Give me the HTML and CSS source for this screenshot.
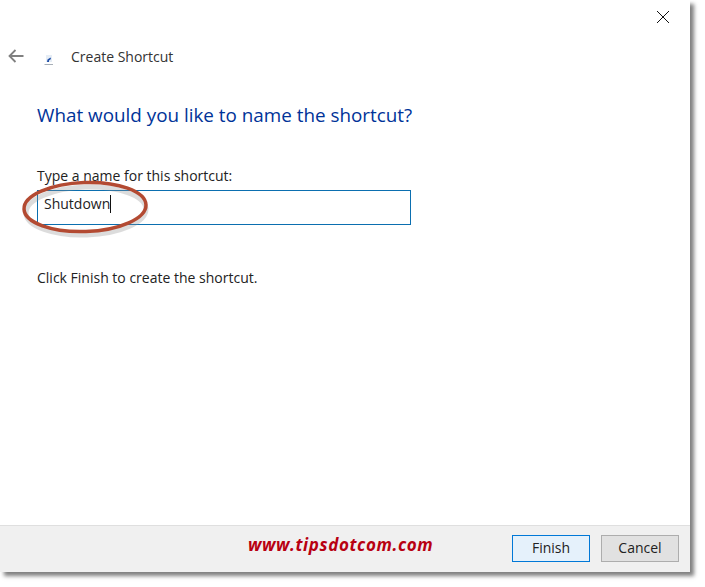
FILE: index.html
```html
<!DOCTYPE html>
<html lang="en">

<head>
  <meta charset="UTF-8">
  <meta name="viewport" content="width=device-width, initial-scale=1.0">
  <title>Create Shortcut</title>
  <link rel="stylesheet" href="styles.css">
</head>

<body>

  <div class="wizard">
    <button class="close-btn" aria-label="Close">
      <svg width="14" height="14" viewBox="0 0 14 14">
        <path d="M1 1L13 13M13 1L1 13" stroke="#111" stroke-width="1" fill="none" />
      </svg>
    </button>

    <div class="wizard-body">
      <div class="title-row">
        <svg class="back-icon" width="16" height="14" viewBox="0 0 16 14">
          <path d="M15.5 7H1.5M7.5 1L1.5 7L7.5 13" stroke="#808080" stroke-width="1.8" fill="none" />
        </svg>
        <svg class="shortcut-icon" width="10" height="10" viewBox="0 0 10 10">
          <rect x="2" y="0" width="6" height="7" fill="#e6edf5" />
          <path d="M3 7L3.5 4.5L6.5 2.5L7 4L5 5.5L5 7Z" fill="#1f4fa8" />
          <path d="M0.5 9.5H9" stroke="#a8b0b8" stroke-width="1" />
        </svg>
        <span class="title-text">Create Shortcut</span>
      </div>

      <h1 class="heading">What would you like to name the shortcut?</h1>

      <label class="name-label" for="shortcutName">Type a name for this shortcut:</label>
      <div class="name-input" id="shortcutName">Shutdown<span class="caret"></span></div>

      <p class="hint">Click Finish to create the shortcut.</p>
    </div>

    <div class="wizard-footer">
      <span class="site-name">www.tipsdotcom.com</span>
      <button class="btn btn-primary">Finish</button>
      <button class="btn">Cancel</button>
    </div>

    <!-- красный овал поверх поля -->
    <svg class="oval" width="140" height="70" viewBox="0 0 140 70">
      <ellipse cx="66" cy="36" rx="60" ry="24" transform="rotate(-2 66 36)" fill="none" stroke="#8c8c8c" stroke-opacity="0.3" stroke-width="5" />
      <ellipse cx="65" cy="32" rx="61" ry="24.5" transform="rotate(-2 65 32)" fill="none" stroke="#b34a32" stroke-width="3.5" />
    </svg>
  </div>

</body>

</html>
```

FILE: styles.css
```css
body {
  font-family: "Open Sans", Arial, sans-serif;
  margin: 0;
  padding: 0;
  min-height: 587px;
  background-color: white;
  color: #222;
}

.wizard {
  position: relative;
  width: 690px;
  height: 572px;
  display: flex;
  flex-direction: column;
  background-color: white;
  box-shadow: 4px 4px 4px rgba(0, 0, 0, 0.5);
}

.close-btn {
  position: absolute;
  top: 10px;
  right: 20px;
  width: 14px;
  height: 14px;
  padding: 0;
  border: none;
  background: none;
}

.close-btn svg {
  display: block;
}

.wizard-body {
  flex: 1;
  padding: 45px 0 0 37px;
}

.title-row {
  display: flex;
  align-items: center;
  height: 22px;
  margin-left: -29px;
}

.back-icon {
  margin-right: 20px;
}

.shortcut-icon {
  margin-right: 17px;
  margin-top: 8px;
}

.title-text {
  font-size: 14px;
  color: #333;
}

.heading {
  margin: 34px 0 0;
  font-size: 18.85px;
  line-height: 28px;
  font-weight: 400;
  color: #003399;
}

.name-label {
  display: block;
  margin-top: 37px;
  font-size: 14px;
  line-height: 20px;
}

.name-input {
  box-sizing: border-box;
  display: flex;
  align-items: center;
  width: 374px;
  height: 35px;
  margin-top: 4px;
  padding: 0 0 8px 6px;
  border: 1px solid #0b6fb0;
  font-size: 14px;
}

.caret {
  width: 1px;
  height: 18px;
  background-color: #111;
}

.hint {
  margin: 43px 0 0;
  font-size: 14px;
  line-height: 20px;
}

.wizard-footer {
  box-sizing: border-box;
  display: flex;
  align-items: center;
  height: 47px;
  padding: 0 11px 1px 0;
  border-top: 1px solid #dfdfdf;
  background-color: #f0f0f0;
}

.site-name {
  margin-left: 248px;
  margin-right: auto;
  padding-bottom: 8px;
  font-family: "Open Sans", Arial, sans-serif;
  font-size: 17px;
  font-weight: 700;
  font-style: italic;
  letter-spacing: 0.62px;
  color: #b80012;
}

.btn {
  box-sizing: border-box;
  width: 78px;
  height: 27px;
  margin-left: 11px;
  padding: 0 0 2px;
  border: 1px solid #adadad;
  background-color: #e1e1e1;
  font-family: "Open Sans", Arial, sans-serif;
  font-size: 14px;
  color: #222;
}

.btn-primary {
  border-color: #0078d7;
  background-color: #e5f1fb;
}

.oval {
  position: absolute;
  left: 20px;
  top: 175px;
}
```
